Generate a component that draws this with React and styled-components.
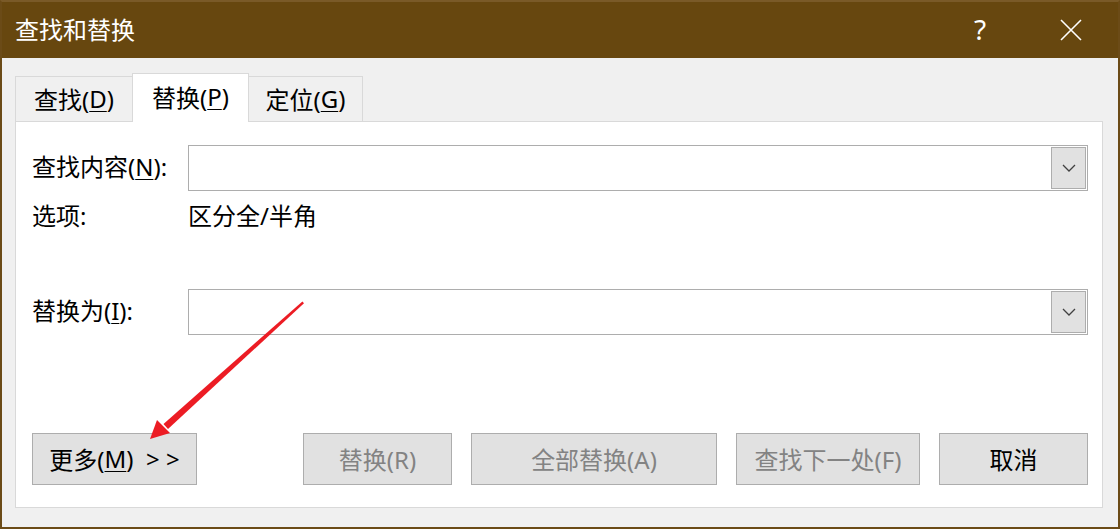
import React from "react";
import styled, { createGlobalStyle } from "styled-components";

const Global = createGlobalStyle`
  html, body { margin: 0; padding: 0; background: #ffffff; }
  body { font-family: "Noto Sans", "Noto Sans CJK SC", sans-serif; }
  * { box-sizing: border-box; }
`;

const Window = styled.div`
  position: relative;
  width: 1120px;
  height: 529px;
  display: flex;
  flex-direction: column;
  border-left: 2px solid #6b4b17;
  border-right: 2px solid #6b4b17;
  border-bottom: 2px solid #6b4b17;
  border-top: 2px solid #7a5a28;
  background: #f0f0f0;
  overflow: hidden;
`;

const TitleBar = styled.div`
  height: 56px;
  flex: none;
  background: #67470f;
  display: flex;
  align-items: center;
  color: #ffffff;
  padding-left: 13px;
`;

const Title = styled.div`
  flex: 1;
  font-family: "Noto Sans CJK SC", sans-serif;
  font-size: 24px;
  line-height: 1;
  margin-top: -3px;
`;

const TitleButton = styled.div`
  width: ${(p) => p.$w}px;
  height: 56px;
  display: flex;
  align-items: center;
  justify-content: center;
  color: #ffffff;
  font-family: "Noto Sans", sans-serif;
  font-size: 28px;
  margin-top: -3px;
`;

const Body = styled.div`
  flex: 1;
  display: flex;
  flex-direction: column;
  padding: 16px 15px 19px 13px;
`;

const Tabs = styled.div`
  display: flex;
  align-items: flex-end;
  height: 48px;
  position: relative;
  z-index: 2;
  margin-bottom: -1px;
`;

const Tab = styled.div`
  width: ${(p) => p.$w}px;
  height: ${(p) => (p.$active ? 49 : 46)}px;
  background: ${(p) => (p.$active ? "#ffffff" : "#f0f0f0")};
  border: 1px solid #d9d9d9;
  border-bottom: ${(p) => (p.$active ? "none" : "1px solid #d9d9d9")};
  border-left: ${(p) => (p.$first || p.$active ? "1px solid #d9d9d9" : "none")};
  border-right: ${(p) => (p.$active ? "1px solid #d9d9d9" : p.$last ? "1px solid #d9d9d9" : "none")};
  display: flex;
  align-items: center;
  justify-content: center;
  font-size: 24px;
  color: #000;
  padding-bottom: ${(p) => (p.$active ? 3 : 1)}px;
`;

const U = styled.span`
  text-decoration: underline;
  text-underline-offset: 3px;
  text-decoration-thickness: 1px;
`;

const Panel = styled.div`
  flex: 1;
  background: #ffffff;
  border: 1px solid #d9d9d9;
  padding: 23px 14px 21px 16px;
  display: flex;
  flex-direction: column;
  position: relative;
  z-index: 1;
`;

const Row = styled.div`
  display: grid;
  grid-template-columns: 156px 1fr;
  align-items: center;
  margin-top: ${(p) => p.$mt || 0}px;
  height: ${(p) => p.$h}px;
`;

const Label = styled.div`
  font-size: 24px;
  color: #000;
  line-height: 1;
  margin-top: -2px;
`;

const Combo = styled.div`
  height: 46px;
  border: 1px solid #adadad;
  background: #ffffff;
  display: flex;
  justify-content: flex-end;
  padding: 1px;
`;

const DropBtn = styled.div`
  width: 35px;
  height: 100%;
  background: #e1e1e1;
  border: 1px solid #adadad;
  display: flex;
  align-items: center;
  justify-content: center;
`;

const ButtonRow = styled.div`
  display: flex;
  margin-top: 98px;
  height: 52px;
  margin-right: 0;
`;

const Spacer = styled.div`
  flex: 1;
`;

const Group = styled.div`
  display: flex;
  gap: 19px;
`;

const Button = styled.div`
  width: ${(p) => p.$w}px;
  height: 52px;
  background: #e1e1e1;
  border: 1px solid #adadad;
  display: flex;
  align-items: center;
  justify-content: center;
  font-size: 24px;
  color: ${(p) => (p.$disabled ? "#838383" : "#000000")};
  padding-bottom: 2px;
  white-space: pre;
`;

const Overlay = styled.svg`
  position: absolute;
  left: 0;
  top: 0;
  pointer-events: none;
  z-index: 10;
`;

const Chevron = () => (
  <svg width="14" height="8" viewBox="0 0 14 8">
    <path d="M1 1 L7 7 L13 1" fill="none" stroke="#404040" strokeWidth="1.3" />
  </svg>
);

export default function App() {
  return (
    <>
      <Global />
      <Window>
        <TitleBar>
          <Title>查找和替换</Title>
          <TitleButton $w={88}>?</TitleButton>
          <TitleButton $w={94}>
            <svg width="22" height="22" viewBox="0 0 22 22" style={{ marginTop: 3 }}>
              <path d="M1 1 L21 21 M21 1 L1 21" stroke="#fff" strokeWidth="1.6" />
            </svg>
          </TitleButton>
        </TitleBar>
        <Body>
          <Tabs>
            <Tab $w={117} $first>
              查找(<U>D</U>)
            </Tab>
            <Tab $w={117} $active>
              替换(<U>P</U>)
            </Tab>
            <Tab $w={114} $last>
              定位(<U>G</U>)
            </Tab>
          </Tabs>
          <Panel>
            <Row $h={46}>
              <Label>
                查找内容(<U>N</U>):
              </Label>
              <Combo>
                <DropBtn>
                  <Chevron />
                </DropBtn>
              </Combo>
            </Row>
            <Row $h={28} $mt={12}>
              <Label>选项:</Label>
              <Label>区分全/半角</Label>
            </Row>
            <Row $h={46} $mt={58}>
              <Label>
                替换为(<U>I</U>):
              </Label>
              <Combo>
                <DropBtn>
                  <Chevron />
                </DropBtn>
              </Combo>
            </Row>
            <ButtonRow>
              <Button $w={165}>
                更多(<U>M</U>)  &gt; &gt;
              </Button>
              <Spacer />
              <Group>
                <Button $w={149} $disabled>替换(R)</Button>
                <Button $w={246} $disabled>全部替换(A)</Button>
                <Button $w={184} $disabled>查找下一处(F)</Button>
                <Button $w={149}>取消</Button>
              </Group>
            </ButtonRow>
          </Panel>
        </Body>
        <Overlay width="1120" height="529" viewBox="0 0 1120 529">
          <polygon points="300.4,299.4 302,301.2 166,427 161.5,422" fill="#ec1c24" />
          <polygon points="148,437 155,418 168,431" fill="#ec1c24" />
        </Overlay>
      </Window>
    </>
  );
}
